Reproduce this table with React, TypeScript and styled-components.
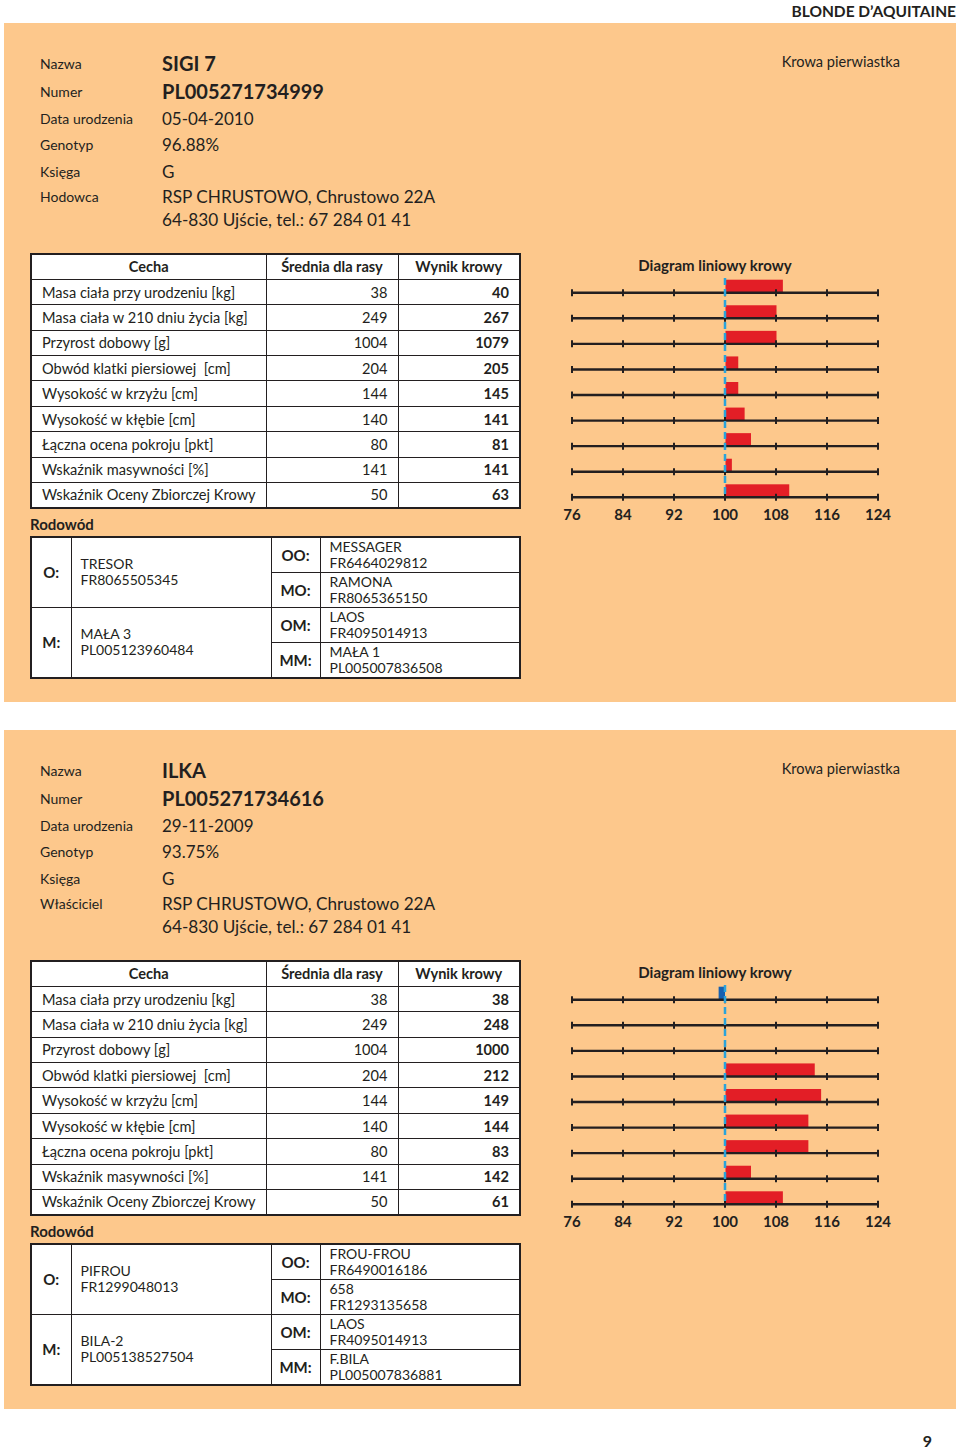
import React from 'react';
import styled, { createGlobalStyle } from 'styled-components';

const GlobalStyle = createGlobalStyle`
  body {
    margin: 0;
    background: #fff;
    font-family: Lato, 'Liberation Sans', sans-serif;
    color: #231f20;
  }
`;

type Pair = [string, string];

type Cow = {
  name: string;
  number: string;
  born: string;
  genotype: string;
  book: string;
  ownerLabel: string;
  owner: string[];
  results: number[];
  chart: number[];
  pedigree: { o: Pair; m: Pair; oo: Pair; mo: Pair; om: Pair; mm: Pair };
};

const traits: [string, number][] = [
  ['Masa ciała przy urodzeniu [kg]', 38],
  ['Masa ciała w 210 dniu życia [kg]', 249],
  ['Przyrost dobowy [g]', 1004],
  ['Obwód klatki piersiowej\u00a0 [cm]', 204],
  ['Wysokość w krzyżu [cm]', 144],
  ['Wysokość w kłębie [cm]', 140],
  ['Łączna ocena pokroju [pkt]', 80],
  ['Wskaźnik masywności [%]', 141],
  ['Wskaźnik Oceny Zbiorczej Krowy', 50],
];

const address = ['RSP CHRUSTOWO, Chrustowo 22A', '64-830 Ujście, tel.: 67 284 01 41'];

const cows: Cow[] = [
  {
    name: 'SIGI 7',
    number: 'PL005271734999',
    born: '05-04-2010',
    genotype: '96.88%',
    book: 'G',
    ownerLabel: 'Hodowca',
    owner: address,
    results: [40, 267, 1079, 205, 145, 141, 81, 141, 63],
    chart: [109, 108, 108, 102, 102, 103, 104, 101, 110],
    pedigree: {
      o: ['TRESOR', 'FR8065505345'],
      m: ['MAŁA 3', 'PL005123960484'],
      oo: ['MESSAGER', 'FR6464029812'],
      mo: ['RAMONA', 'FR8065365150'],
      om: ['LAOS', 'FR4095014913'],
      mm: ['MAŁA 1', 'PL005007836508'],
    },
  },
  {
    name: 'ILKA',
    number: 'PL005271734616',
    born: '29-11-2009',
    genotype: '93.75%',
    book: 'G',
    ownerLabel: 'Właściciel',
    owner: address,
    results: [38, 248, 1000, 212, 149, 144, 83, 142, 61],
    chart: [99, 100, 100, 114, 115, 113, 113, 104, 109],
    pedigree: {
      o: ['PIFROU', 'FR1299048013'],
      m: ['BILA-2', 'PL005138527504'],
      oo: ['FROU-FROU', 'FR6490016186'],
      mo: ['658', 'FR1293135658'],
      om: ['LAOS', 'FR4095014913'],
      mm: ['F.BILA', 'PL005007836881'],
    },
  },
];

// chart geometry (px inside the svg)
const AXIS_LEFT = 12;
const TICK_STEP = 51;
const ZERO_X = AXIS_LEFT + TICK_STEP * 3;
const PX_PER_UNIT = TICK_STEP / 8;
const FIRST_LINE = 15.7;
const LINE_STEP = 25.575;
const BAR_H = 13;

const LineChart = ({ values }: { values: number[] }) => {
  const lastY = FIRST_LINE + LINE_STEP * (values.length - 1);
  return (
    <SSvg width={330} height={226} viewBox='0 0 330 226'>
      {values.map((v, i) => {
        const y = FIRST_LINE + i * LINE_STEP;
        const w = Math.abs(v - 100) * PX_PER_UNIT;
        return (
          <g key={i}>
            {v > 100 && <rect x={ZERO_X + 0.5} y={y - BAR_H} width={w} height={BAR_H} fill='#e31e26' />}
            {v < 100 && <rect x={ZERO_X - w} y={y - BAR_H} width={w} height={BAR_H} fill='#1660b0' />}
            <line x1={AXIS_LEFT} x2={AXIS_LEFT + TICK_STEP * 6} y1={y} y2={y} stroke='#231f20' strokeWidth={2.4} />
            {[0, 1, 2, 3, 4, 5, 6].map((k) => (
              <line
                key={k}
                x1={AXIS_LEFT + k * TICK_STEP}
                x2={AXIS_LEFT + k * TICK_STEP}
                y1={y - 3.5}
                y2={y + 3.5}
                stroke='#231f20'
                strokeWidth={2}
              />
            ))}
          </g>
        );
      })}
      <line x1={ZERO_X} x2={ZERO_X} y1={1} y2={lastY} stroke='#2aa3db' strokeWidth={2.5} strokeDasharray='7 4' />
    </SSvg>
  );
};

const Person = ({ p }: { p: Pair }) => (
  <>
    {p[0]}
    <br />
    {p[1]}
  </>
);

const CowCard = ({ cow }: { cow: Cow }) => (
  <SPanel>
    <STop>
      <SInfo>
        <SLabel>Nazwa</SLabel>
        <SStrong>{cow.name}</SStrong>
        <SLabel>Numer</SLabel>
        <SStrong>{cow.number}</SStrong>
        <SLabel>Data urodzenia</SLabel>
        <SValue>{cow.born}</SValue>
        <SLabel>Genotyp</SLabel>
        <SValue>{cow.genotype}</SValue>
        <SLabel>Księga</SLabel>
        <SValue>{cow.book}</SValue>
        <SLabel $top>{cow.ownerLabel}</SLabel>
        <SAddress>
          {cow.owner.map((l) => (
            <div key={l}>{l}</div>
          ))}
        </SAddress>
      </SInfo>
      <SKind>Krowa pierwiastka</SKind>
    </STop>

    <SBottom>
      <SLeft>
        <STable>
          <colgroup>
            <col style={{ width: 235 }} />
            <col style={{ width: 132 }} />
            <col style={{ width: 122 }} />
          </colgroup>
          <thead>
            <tr>
              <SHead>Cecha</SHead>
              <SHead>Średnia dla rasy</SHead>
              <SHead>Wynik krowy</SHead>
            </tr>
          </thead>
          <tbody>
            {traits.map(([label, avg], i) => (
              <tr key={label}>
                <SCell>{label}</SCell>
                <SCell $num>{avg}</SCell>
                <SCell $num $bold>
                  {cow.results[i]}
                </SCell>
              </tr>
            ))}
          </tbody>
        </STable>

        <STitle>Rodowód</STitle>
        <SPedTable>
          <colgroup>
            <col style={{ width: 40 }} />
            <col style={{ width: 200 }} />
            <col style={{ width: 49 }} />
            <col style={{ width: 200 }} />
          </colgroup>
          <tbody>
            <tr>
              <SPedKey rowSpan={2}>O:</SPedKey>
              <SPedName rowSpan={2}>
                <Person p={cow.pedigree.o} />
              </SPedName>
              <SPedKey>OO:</SPedKey>
              <SPedName>
                <Person p={cow.pedigree.oo} />
              </SPedName>
            </tr>
            <tr>
              <SPedKey>MO:</SPedKey>
              <SPedName>
                <Person p={cow.pedigree.mo} />
              </SPedName>
            </tr>
            <tr>
              <SPedKey rowSpan={2}>M:</SPedKey>
              <SPedName rowSpan={2}>
                <Person p={cow.pedigree.m} />
              </SPedName>
              <SPedKey>OM:</SPedKey>
              <SPedName>
                <Person p={cow.pedigree.om} />
              </SPedName>
            </tr>
            <tr>
              <SPedKey>MM:</SPedKey>
              <SPedName>
                <Person p={cow.pedigree.mm} />
              </SPedName>
            </tr>
          </tbody>
        </SPedTable>
      </SLeft>

      <SChart>
        <SChartTitle>Diagram liniowy krowy</SChartTitle>
        <LineChart values={cow.chart} />
        <SScale>
          {[76, 84, 92, 100, 108, 116, 124].map((n) => (
            <span key={n}>{n}</span>
          ))}
        </SScale>
      </SChart>
    </SBottom>
  </SPanel>
);

const App = () => {
  return (
    <SPage>
      <GlobalStyle />
      <SBreed>BLONDE D’AQUITAINE</SBreed>
      {cows.map((c) => (
        <CowCard key={c.number} cow={c} />
      ))}
      <SPageNo>9</SPageNo>
    </SPage>
  );
};

export default App;

const SPage = styled.div`
  width: 960px;
  min-height: 1449px;
`;

const SBreed = styled.div`
  height: 23px;
  line-height: 23px;
  padding-right: 4px;
  text-align: right;
  font-size: 15.5px;
  font-weight: 700;
`;

const SPanel = styled.section`
  box-sizing: border-box;
  height: 679px;
  margin: 0 4px;
  padding: 26px 0 0 26px;
  background: #fdc88c;
  & + & {
    margin-top: 28px;
  }
`;

const STop = styled.div`
  display: flex;
  justify-content: space-between;
  align-items: flex-start;
  padding-right: 56px;
`;

const SInfo = styled.div`
  display: grid;
  grid-template-columns: 122px auto;
  grid-template-rows: 28px 28px 26.5px 26.5px 26.5px auto;
  align-items: center;
  padding-left: 10px;
`;

const SLabel = styled.div<{ $top?: boolean }>`
  font-size: 14px;
  align-self: ${(p) => (p.$top ? 'start' : 'center')};
  line-height: ${(p) => (p.$top ? '23px' : 'normal')};
`;

const SValue = styled.div`
  font-size: 17px;
`;

const SStrong = styled.div`
  font-size: 20px;
  font-weight: 700;
`;

const SAddress = styled.div`
  font-size: 17.2px;
  line-height: 23px;
`;

const SKind = styled.div`
  font-size: 14.6px;
  line-height: 25px;
`;

const SBottom = styled.div`
  display: flex;
  margin-top: 22.5px;
`;

const SLeft = styled.div`
  width: 489px;
`;

const STable = styled.table`
  width: 489px;
  table-layout: fixed;
  border-collapse: collapse;
  background: #fff;
  border: 2px solid #231f20;
  font-size: 14.6px;
`;

const SHead = styled.th`
  height: 25.4px;
  padding: 0;
  border: 1.6px solid #231f20;
  font-weight: 700;
  text-align: center;
  box-sizing: border-box;
`;

const SCell = styled.td<{ $num?: boolean; $bold?: boolean }>`
  height: 25.4px;
  padding: 0 10px;
  border: 1.6px solid #231f20;
  box-sizing: border-box;
  white-space: nowrap;
  text-align: ${(p) => (p.$num ? 'right' : 'left')};
  font-weight: ${(p) => (p.$bold ? 700 : 400)};
`;

const STitle = styled.div`
  padding-top: 4px;
  line-height: 23px;
  font-size: 15px;
  font-weight: 700;
`;

const SPedTable = styled.table`
  width: 489px;
  table-layout: fixed;
  border-collapse: collapse;
  background: #fff;
  border: 2px solid #231f20;
`;

const SPedKey = styled.td`
  height: 34px;
  padding: 0;
  border: 1.6px solid #231f20;
  text-align: center;
  font-size: 15px;
  font-weight: 700;
`;

const SPedName = styled.td`
  height: 34px;
  padding: 0 0 0 9px;
  border: 1.6px solid #231f20;
  font-size: 14px;
  line-height: 16px;
  vertical-align: middle;
`;

const SChart = styled.div`
  margin-left: 41px;
  width: 330px;
`;

const SChartTitle = styled.div`
  width: 310px;
  line-height: 24px;
  text-align: center;
  font-size: 15px;
  font-weight: 700;
`;

const SSvg = styled.svg`
  display: block;
`;

const SScale = styled.div`
  display: grid;
  grid-template-columns: repeat(7, 51px);
  margin-left: -13.5px;
  line-height: 22px;
  font-size: 15px;
  font-weight: 700;
  text-align: center;
`;

const SPageNo = styled.div`
  padding: 22px 28px 0 0;
  line-height: 20px;
  text-align: right;
  font-size: 16px;
  font-weight: 700;
`;
